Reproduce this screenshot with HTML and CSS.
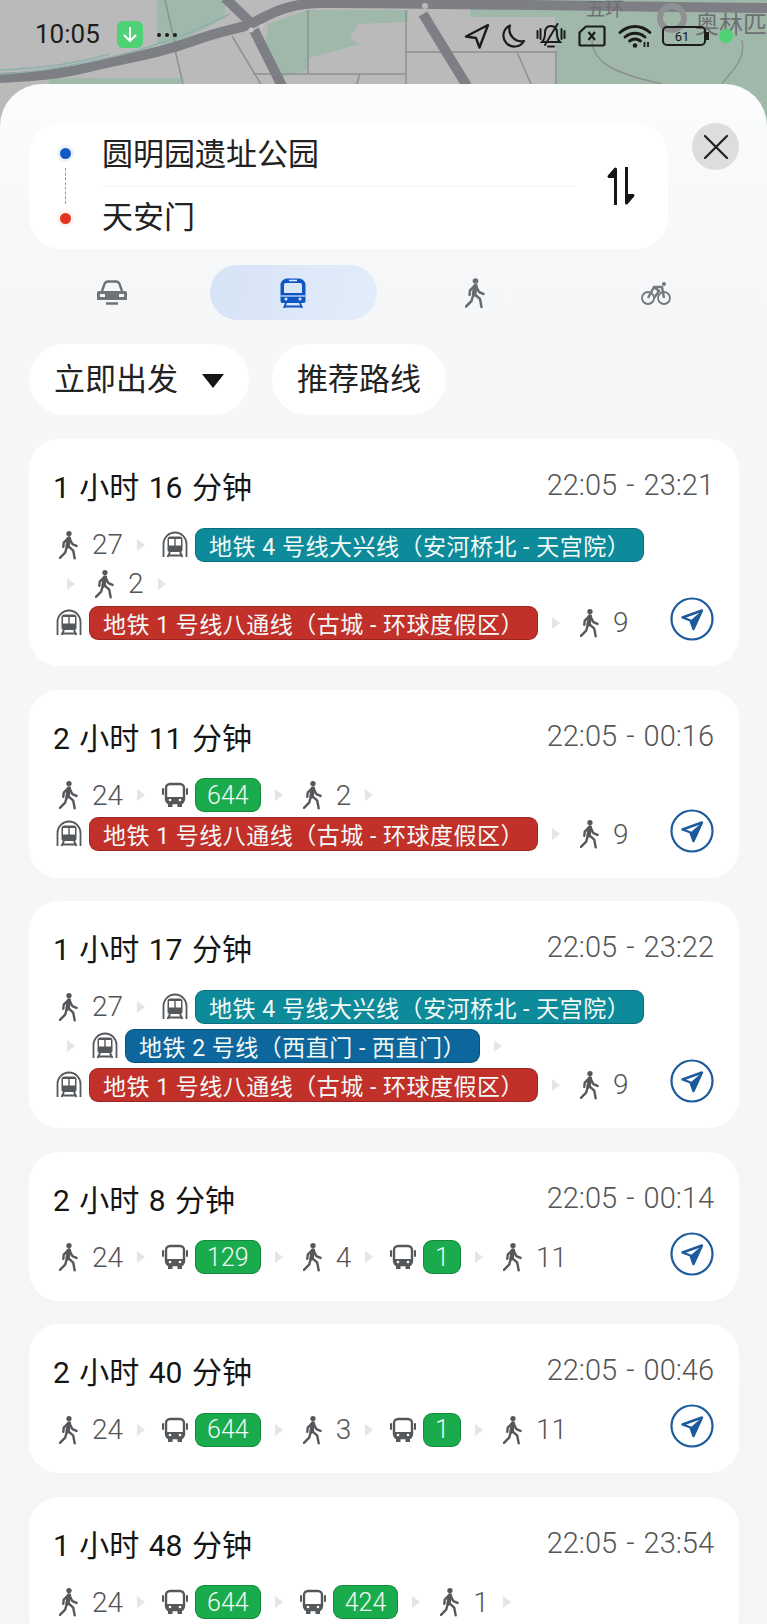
FILE: index.html
```html
<!DOCTYPE html>
<html lang="zh-CN">
<head>
    <meta charset="UTF-8">
    <meta name="viewport" content="width=device-width, initial-scale=1.0">
    <title>路线规划</title>
    <link rel="stylesheet" href="styles.css">
</head>
<body>
    <!-- icons -->
    <svg class="defs" width="0" height="0">
        <symbol id="walk" viewBox="0 0 20 30">
            <circle cx="10.500" cy="3" r="2.800" fill="currentColor"/>
            <path d="M10.500 8 9 16.500" stroke="currentColor" stroke-width="4.600" stroke-linecap="round" fill="none"/>
            <path d="M8.500 16 6.500 23 1 28.500M9.500 16l5.500 5 1.500 8M9.500 8 5 12.500l-.5 4.500M11 8l3 6 4.500 2" stroke="currentColor" stroke-width="2.500" stroke-linecap="round" stroke-linejoin="round" fill="none"/>
        </symbol>
        <symbol id="subway" viewBox="0 0 26 28">
            <path d="M1.500 26V13a11.500 11.500 0 0 1 23 0v13" stroke="currentColor" stroke-width="1.800" fill="none"/>
            <path d="M8.500 5.500h9a3 3 0 0 1 3 3V19a2 2 0 0 1-2 2h-11a2 2 0 0 1-2-2V8.500a3 3 0 0 1 3-3z" fill="currentColor"/>
            <path d="M7 8h5.300v6.500H7zM13.700 8H19v6.500h-5.300z" fill="#fff"/>
            <path d="M8 21l-2.500 5M18 21l2.500 5M6.500 24.500h13" stroke="currentColor" stroke-width="1.800" fill="none"/>
        </symbol>
        <symbol id="bus" viewBox="0 0 26 26">
            <rect x="4" y="2" width="18" height="19" rx="4" stroke="currentColor" stroke-width="2.400" fill="none"/>
            <path d="M4 15h18v4a3 3 0 0 1-3 3H7a3 3 0 0 1-3-3z" fill="currentColor"/>
            <path d="M1 7v5M25 7v5" stroke="currentColor" stroke-width="2" stroke-linecap="round"/>
            <path d="M6 21h4.500v4H6zM15.500 21H20v4h-4.500z" fill="currentColor"/>
            <circle cx="8" cy="18" r="1.300" fill="#fff"/>
            <circle cx="18" cy="18" r="1.300" fill="#fff"/>
        </symbol>
        <symbol id="nav" viewBox="0 0 44 44">
            <circle cx="22" cy="22" r="20.500" stroke="#1c5a9c" stroke-width="2.200" fill="#fff"/>
            <path d="M32 13.500 12.500 20.500l8 3 3 8.500z" stroke="#1c5a9c" stroke-width="2.400" stroke-linejoin="round" fill="none"/>
            <path d="M32 13.500 20.500 23.500l3 8.500z" fill="#1c5a9c"/>
        </symbol>
    </svg>

    <!-- map behind everything -->
    <div class="map">
        <svg width="767" height="130" viewBox="0 0 767 130">
            <rect width="767" height="130" fill="#b9bab9"/>
            <path d="M555 0h212v130H555zM470 0h85v17h-85zM157 0h68v18l-50 26h-18zM268 24l40-14v60l-30 8-14-24zM308 10h100v12l-50 2-8 14 10 6-52 14zM49 78h132v8H49z" fill="#a0b8aa"/>
            <path d="M308 10v64h98V10M308 74h-55M406 52h150V84M360 74l-4 12M406 74v12M517 52l14 32M592 40c0 25 30 35 70 44M742 40c4 20-10 30-20 44M165 0l12 52M175 50l8 34M232 36l30 50" stroke="#8f918f" stroke-width="1.500" fill="none"/>
            <path d="M0 78C50 76 70 72 98 65S150 56 190 42 235 30 250 24 280 4 320 3 560 6 767 8" stroke="#7d7f85" stroke-width="10" fill="none"/>
            <path d="M225 -2 250 22M254 30l28 56M423 14l44 72" stroke="#7d7f85" stroke-width="10" fill="none"/>
            <path d="M0 74C40 72 70 66 98 60S170 44 230 14M0 70c50-2 80-8 110-16" stroke="#90b0ae" stroke-width="1.500" fill="none"/>
            <circle cx="251" cy="30" r="2.500" fill="#c6c7c6"/><circle cx="262" cy="26" r="2" fill="#c6c7c6"/>
            <circle cx="425" cy="6" r="3" fill="#b9bab9"/>
            <circle cx="672" cy="18" r="12" fill="none" stroke="#8e9092" stroke-width="6"/>
        </svg>
        <span class="map-label ring">五环</span>
        <span class="map-label park">奥林匹</span>
    </div>

    <div class="status-bar">
        <span class="clock">10:05</span>
        <span class="app-badge">
            <svg width="16" height="18" viewBox="0 0 16 18"><path d="M8 2v13M2.500 9.500 8 15l5.500-5.500" stroke="#fff" stroke-width="2" stroke-linecap="round" stroke-linejoin="round" fill="none"/></svg>
        </span>
        <span class="more-dots">
            <i></i><i></i><i></i>
        </span>
        <div class="status-icons">
            <svg width="26" height="26" viewBox="0 0 26 26"><path d="M24 2 2 13.500l10 1.500 3.500 9.500z" stroke="#1c1c1c" stroke-width="2.400" stroke-linejoin="round" fill="none"/></svg>
            <svg width="26" height="26" viewBox="0 0 26 26"><path d="M10 2.500A11 11 0 1 0 24 18 12 12 0 0 1 10 2.500z" stroke="#1c1c1c" stroke-width="2.200" stroke-linejoin="round" fill="none"/></svg>
            <svg width="30" height="26" viewBox="0 0 30 26"><path d="M15 3c-4 0-6 3-6 7 0 5-1 7-3 9h18c-2-2-3-4-3-9 0-4-2-7-6-7zM12 23.500h6M1.500 8v7M4.500 6v10M28.500 8v7M25.500 6v10M21.500 1 9 22" stroke="#1c1c1c" stroke-width="2" stroke-linecap="round" fill="none"/></svg>
            <svg class="s-sim" width="28" height="22" viewBox="0 0 28 22"><path d="M8 1.500h17a1.500 1.500 0 0 1 1.500 1.500v16a1.500 1.500 0 0 1-1.500 1.500H3A1.500 1.500 0 0 1 1.500 19V7.500z" stroke="#1c1c1c" stroke-width="2.200" stroke-linejoin="round" fill="none"/><path d="m10.500 7 6.500 8M17 7l-6.500 8" stroke="#1c1c1c" stroke-width="2.200"/></svg>
            <svg class="s-wifi" width="34" height="24" viewBox="0 0 34 24"><path d="M2 8.500c9-8 21-8 30 0M7 13c6-5 14-5 20 0M11.500 17c3.500-2.500 7.500-2.500 11 0" stroke="#1c1c1c" stroke-width="2.800" stroke-linecap="round" fill="none"/><circle cx="17" cy="21.500" r="2.300" fill="#1c1c1c"/><path d="M26.500 18v5M30 18v5" stroke="#1c1c1c" stroke-width="1.800"/></svg>
            <span class="battery"><span class="battery-num">61</span></span>
            <i class="battery-nub"></i>
            <i class="green-dot"></i>
        </div>
    </div>

    <div class="sheet">
        <div class="search-row">
            <div class="search-card">
                <div class="pins">
                    <i class="pin pin-start"></i>
                    <i class="pin-line"></i>
                    <i class="pin pin-end"></i>
                </div>
                <div class="places">
                    <div class="place">圆明园遗址公园</div>
                    <div class="place place-end">天安门</div>
                </div>
                <svg class="swap" width="30" height="38" viewBox="0 0 30 38"><path d="M9.500 38V2L3 9.500h6.500" stroke="#151515" stroke-width="3" stroke-linejoin="round" fill="#151515"/><path d="M20.500 0v36l6.500-7.500h-6.500" stroke="#151515" stroke-width="3" stroke-linejoin="round" fill="#151515"/></svg>
            </div>
            <button class="close-btn">
                <svg width="26" height="26" viewBox="0 0 26 26"><path d="m2 2 22 22M24 2 2 24" stroke="#1f1f1f" stroke-width="2.200" stroke-linecap="round"/></svg>
            </button>
        </div>

        <div class="modes">
            <div class="mode">
                <svg width="32" height="26" viewBox="0 0 32 26"><path d="M6 11 8.500 4a4 4 0 0 1 3.500-2.500h8A4 4 0 0 1 23.500 4L26 11" stroke="#6f7276" stroke-width="2.400" fill="none"/><path d="M3 11h26a2 2 0 0 1 2 2v7H1v-7a2 2 0 0 1 2-2z" fill="#6f7276"/><path d="M4 14h5v3H4zM23 14h5v3h-5z" fill="#f4f6f7"/><path d="M10 23.500h12" stroke="#6f7276" stroke-width="2.500"/></svg>
            </div>
            <div class="mode mode-active">
                <svg width="28" height="32" viewBox="0 0 28 32"><path d="M8 1.500h12A6.500 6.500 0 0 1 26.500 8v16a2 2 0 0 1-2 2h-21a2 2 0 0 1-2-2V8A6.500 6.500 0 0 1 8 1.500z" fill="#0f55c4"/><path d="M5 8a2 2 0 0 1 2-2h14a2 2 0 0 1 2 2v8H5z" fill="#dce8f9"/><path d="M10 3.500h8" stroke="#dce8f9" stroke-width="1.600"/><path d="M1.500 19h25" stroke="#dce8f9" stroke-width="1.200"/><circle cx="7" cy="22" r="1.500" fill="#dce8f9"/><circle cx="21" cy="22" r="1.500" fill="#dce8f9"/><path d="M7 26l-2 5M21 26l2 5M5 29.500h18" stroke="#0f55c4" stroke-width="2"/></svg>
            </div>
            <div class="mode mode-icon">
                <svg width="20" height="32"><use href="#walk"/></svg>
            </div>
            <div class="mode">
                <svg width="30" height="24" viewBox="0 0 30 24"><circle cx="7" cy="17" r="6" stroke="#75787c" stroke-width="1.800" fill="none"/><circle cx="23" cy="17" r="6" stroke="#75787c" stroke-width="1.800" fill="none"/><path d="M7 17 13 6h8l2 11M13 17l5-7-5-4" stroke="#75787c" stroke-width="2.400" fill="none"/><circle cx="23" cy="3" r="2" fill="#75787c"/></svg>
            </div>
        </div>

        <div class="filters">
            <div class="chip">立即出发<i class="caret"></i></div>
            <div class="chip">推荐路线</div>
        </div>

        <div class="route">
            <div class="route-head"><span class="duration">1 小时 16 分钟</span><span class="times">22:05 - 23:21</span></div>
            <div class="route-body">
                <div class="legs">
                    <div class="leg-row">
                        <svg class="walk"><use href="#walk"/></svg><span class="mins">27</span><i class="chev"></i>
                        <span class="ride"><svg class="subway"><use href="#subway"/></svg><span class="line line-4">地铁 4 号线大兴线（安河桥北 - 天宫院）</span></span>
                    </div>
                    <div class="leg-row leg-row-cont">
                        <i class="chev"></i><svg class="walk"><use href="#walk"/></svg><span class="mins">2</span><i class="chev"></i>
                    </div>
                    <div class="leg-row">
                        <span class="ride ride-first"><svg class="subway"><use href="#subway"/></svg><span class="line line-1">地铁 1 号线八通线（古城 - 环球度假区）</span></span>
                        <i class="chev"></i><svg class="walk"><use href="#walk"/></svg><span class="mins">9</span>
                    </div>
                </div>
                <svg class="nav"><use href="#nav"/></svg>
            </div>
        </div>

        <div class="route">
            <div class="route-head"><span class="duration">2 小时 11 分钟</span><span class="times">22:05 - 00:16</span></div>
            <div class="route-body">
                <div class="legs">
                    <div class="leg-row">
                        <svg class="walk"><use href="#walk"/></svg><span class="mins">24</span><i class="chev"></i>
                        <span class="ride"><svg class="bus"><use href="#bus"/></svg><span class="line line-bus">644</span></span><i class="chev"></i>
                        <svg class="walk"><use href="#walk"/></svg><span class="mins">2</span><i class="chev"></i>
                    </div>
                    <div class="leg-row">
                        <span class="ride ride-first"><svg class="subway"><use href="#subway"/></svg><span class="line line-1">地铁 1 号线八通线（古城 - 环球度假区）</span></span>
                        <i class="chev"></i><svg class="walk"><use href="#walk"/></svg><span class="mins">9</span>
                    </div>
                </div>
                <svg class="nav"><use href="#nav"/></svg>
            </div>
        </div>

        <div class="route">
            <div class="route-head"><span class="duration">1 小时 17 分钟</span><span class="times">22:05 - 23:22</span></div>
            <div class="route-body">
                <div class="legs">
                    <div class="leg-row">
                        <svg class="walk"><use href="#walk"/></svg><span class="mins">27</span><i class="chev"></i>
                        <span class="ride"><svg class="subway"><use href="#subway"/></svg><span class="line line-4">地铁 4 号线大兴线（安河桥北 - 天宫院）</span></span>
                    </div>
                    <div class="leg-row leg-row-cont">
                        <i class="chev"></i>
                        <span class="ride"><svg class="subway"><use href="#subway"/></svg><span class="line line-2">地铁 2 号线（西直门 - 西直门）</span></span><i class="chev"></i>
                    </div>
                    <div class="leg-row">
                        <span class="ride ride-first"><svg class="subway"><use href="#subway"/></svg><span class="line line-1">地铁 1 号线八通线（古城 - 环球度假区）</span></span>
                        <i class="chev"></i><svg class="walk"><use href="#walk"/></svg><span class="mins">9</span>
                    </div>
                </div>
                <svg class="nav"><use href="#nav"/></svg>
            </div>
        </div>

        <div class="route">
            <div class="route-head"><span class="duration">2 小时 8 分钟</span><span class="times">22:05 - 00:14</span></div>
            <div class="route-body">
                <div class="legs">
                    <div class="leg-row">
                        <svg class="walk"><use href="#walk"/></svg><span class="mins">24</span><i class="chev"></i>
                        <span class="ride"><svg class="bus"><use href="#bus"/></svg><span class="line line-bus">129</span></span><i class="chev"></i>
                        <svg class="walk"><use href="#walk"/></svg><span class="mins">4</span><i class="chev"></i>
                        <span class="ride"><svg class="bus"><use href="#bus"/></svg><span class="line line-bus">1</span></span><i class="chev"></i>
                        <svg class="walk"><use href="#walk"/></svg><span class="mins">11</span>
                    </div>
                </div>
                <svg class="nav"><use href="#nav"/></svg>
            </div>
        </div>

        <div class="route">
            <div class="route-head"><span class="duration">2 小时 40 分钟</span><span class="times">22:05 - 00:46</span></div>
            <div class="route-body">
                <div class="legs">
                    <div class="leg-row">
                        <svg class="walk"><use href="#walk"/></svg><span class="mins">24</span><i class="chev"></i>
                        <span class="ride"><svg class="bus"><use href="#bus"/></svg><span class="line line-bus">644</span></span><i class="chev"></i>
                        <svg class="walk"><use href="#walk"/></svg><span class="mins">3</span><i class="chev"></i>
                        <span class="ride"><svg class="bus"><use href="#bus"/></svg><span class="line line-bus">1</span></span><i class="chev"></i>
                        <svg class="walk"><use href="#walk"/></svg><span class="mins">11</span>
                    </div>
                </div>
                <svg class="nav"><use href="#nav"/></svg>
            </div>
        </div>

        <div class="route">
            <div class="route-head"><span class="duration">1 小时 48 分钟</span><span class="times">22:05 - 23:54</span></div>
            <div class="route-body">
                <div class="legs">
                    <div class="leg-row">
                        <svg class="walk"><use href="#walk"/></svg><span class="mins">24</span><i class="chev"></i>
                        <span class="ride"><svg class="bus"><use href="#bus"/></svg><span class="line line-bus">644</span></span><i class="chev"></i>
                        <span class="ride"><svg class="bus"><use href="#bus"/></svg><span class="line line-bus">424</span></span><i class="chev"></i>
                        <svg class="walk"><use href="#walk"/></svg><span class="mins">1</span><i class="chev"></i>
                    </div>
                </div>
            </div>
        </div>
    </div>
</body>
</html>
```

FILE: styles.css
```css
html, body {
    height: 1624px;
    overflow: hidden;
}
body {
    margin: 0;
    position: relative;
    background: #b9bab9;
    font-family: Roboto, "Noto Sans CJK SC", sans-serif;
    color: #1a1a1a;
}
i {
    display: block;
}
.defs {
    position: absolute;
}

/* map */
.map {
    position: absolute;
    top: 0;
    left: 0;
    width: 767px;
    height: 130px;
    overflow: hidden;
}
.map-label {
    position: absolute;
    color: #6d6f72;
    white-space: nowrap;
}
.ring {
    left: 586px;
    top: 0;
    font-size: 19px;
    line-height: 19px;
}
.park {
    left: 695px;
    top: 13px;
    font-size: 24px;
    line-height: 24px;
}

/* status bar */
.status-bar {
    position: relative;
    height: 84px;
    padding: 21px 0 0 35px;
    box-sizing: border-box;
    display: flex;
    align-items: flex-start;
}
.clock {
    font-size: 26px;
    line-height: 27px;
    color: #1c1c1c;
    width: 82px;
}
.app-badge {
    width: 26px;
    height: 27px;
    border-radius: 6px;
    background: #4ed275;
    display: flex;
    align-items: center;
    justify-content: center;
}
.more-dots {
    display: flex;
    gap: 4px;
    margin: 12px 0 0 14px;
}
.more-dots i {
    width: 4px;
    height: 4px;
    border-radius: 50%;
    background: #1c1c1c;
}
.status-icons {
    position: absolute;
    top: 23px;
    left: 464px;
    display: flex;
    align-items: center;
    gap: 10px;
}
.s-sim, .s-wifi {
    margin-left: 2px;
}
.battery {
    width: 44px;
    height: 20px;
    border: 2px solid #1c1c1c;
    border-radius: 5px;
    box-sizing: border-box;
    display: flex;
    align-items: center;
    justify-content: center;
}
.battery-num {
    font-size: 13px;
    padding-right: 4px;
    line-height: 15px;
}
.battery-nub {
    width: 3px;
    height: 8px;
    background: #1c1c1c;
    margin-left: -10px;
}
.green-dot {
    width: 14px;
    height: 14px;
    border-radius: 50%;
    background: #4ed275;
}

/* sheet */
.sheet {
    position: relative;
    height: 1540px;
    padding: 39px 28px 0 29px;
    box-sizing: border-box;
    border-radius: 42px 42px 0 0;
    background: linear-gradient(180deg, #fbfcfc 0, #f5f7f8 200px, #f3f5f7 100%);
}
.search-row {
    display: flex;
    justify-content: space-between;
    align-items: flex-start;
}
.search-card {
    width: 639px;
    height: 126px;
    border-radius: 32px;
    background: #fff;
    display: flex;
    align-items: center;
    box-sizing: border-box;
    padding: 0 32px 0 30px;
}
.pins {
    width: 12px;
    margin-right: 31px;
    display: flex;
    flex-direction: column;
    align-items: center;
}
.pin {
    width: 11px;
    height: 11px;
    border-radius: 50%;
}
.pin-start {
    background: #1259c8;
    box-shadow: 0 0 0 3px #edf3fc;
}
.pin-end {
    background: #e2351f;
    box-shadow: 0 0 0 3px #fdf2ec;
}
.pin-line {
    height: 36px;
    margin: 9px 0;
    border-left: 1px dashed #999;
}
.places {
    flex: 1;
}
.place {
    height: 62px;
    line-height: 62px;
    font-size: 31px;
    color: #222;
    border-bottom: 1px solid #f3f3f1;
}
.place-end {
    border-bottom: none;
}
.swap {
    margin-left: 31px;
}
.close-btn {
    width: 47px;
    height: 47px;
    border: none;
    padding: 0;
    border-radius: 50%;
    background: #dcdddd;
    display: flex;
    align-items: center;
    justify-content: center;
}

.modes {
    display: grid;
    grid-template-columns: repeat(4, 1fr);
    column-gap: 15px;
    margin-top: 16px;
}
.mode {
    height: 55px;
    border-radius: 28px;
    display: flex;
    align-items: center;
    justify-content: center;
}
.mode-active {
    background: linear-gradient(100deg, #d6e3f6, #e3ecfa);
}
.mode-icon {
    color: #6a6d70;
}

.filters {
    display: flex;
    gap: 23px;
    margin-top: 24px;
}
.chip {
    height: 71px;
    padding: 0 25px 6px;
    box-sizing: border-box;
    border-radius: 36px;
    background: #fff;
    display: flex;
    align-items: center;
    font-size: 31px;
    color: #222;
}
.caret {
    width: 0;
    height: 0;
    border-left: 11px solid transparent;
    border-right: 11px solid transparent;
    border-top: 14px solid #151515;
    margin: 8px 0 0 24px;
}

/* route cards */
.route {
    background: #fff;
    border-radius: 30px;
    margin-top: 24px;
    padding: 28px 25px 24px 24px;
}
.route + .route {
    margin-top: 23.500px;
}
.route-head {
    display: flex;
    justify-content: space-between;
    align-items: center;
    height: 36px;
    margin-bottom: 22px;
}
.duration {
    font-size: 30px;
    word-spacing: 2px;
    color: #151515;
}
.times {
    font-size: 29px;
    font-weight: 300;
    word-spacing: 2px;
    color: #555;
}
.route-body {
    display: flex;
    justify-content: space-between;
    align-items: flex-end;
}
.legs {
    flex: 1;
}
.leg-row {
    height: 39px;
    display: flex;
    align-items: center;
    gap: 14px;
    color: #55585b;
}
.leg-row-cont {
    padding-left: 14px;
}
.walk {
    width: 19px;
    height: 30px;
    margin-left: 6px;
    color: #55585b;
}
.mins {
    font-size: 28px;
    font-weight: 300;
    color: #555;
}
.chev {
    width: 0;
    height: 0;
    border-left: 8px solid #e3e5e7;
    border-top: 6px solid transparent;
    border-bottom: 6px solid transparent;
}
.ride {
    display: flex;
    align-items: center;
    gap: 7px;
    margin-left: 3px;
}
.ride-first {
    margin-left: 3px;
}
.subway {
    width: 26px;
    height: 28px;
}
.bus {
    width: 26px;
    height: 26px;
}
.line {
    height: 34px;
    box-sizing: border-box;
    padding: 0 13px;
    border-radius: 9px;
    border: 1px solid rgba(0, 0, 0, 0.2);
    display: flex;
    align-items: center;
    color: #f4faf8;
    font-size: 23px;
    letter-spacing: 0.500px;
    white-space: nowrap;
}
.line-4 {
    background: #0d8b9b;
}
.line-1 {
    background: #c2302a;
}
.line-2 {
    background: #0e679c;
}
.line-bus {
    background: #19ab4c;
    font-size: 25px;
    font-weight: 300;
    letter-spacing: 0;
    padding: 0 11px;
}
.nav {
    width: 44px;
    height: 44px;
    flex: none;
    margin: -10px 0 1px;
}
```
